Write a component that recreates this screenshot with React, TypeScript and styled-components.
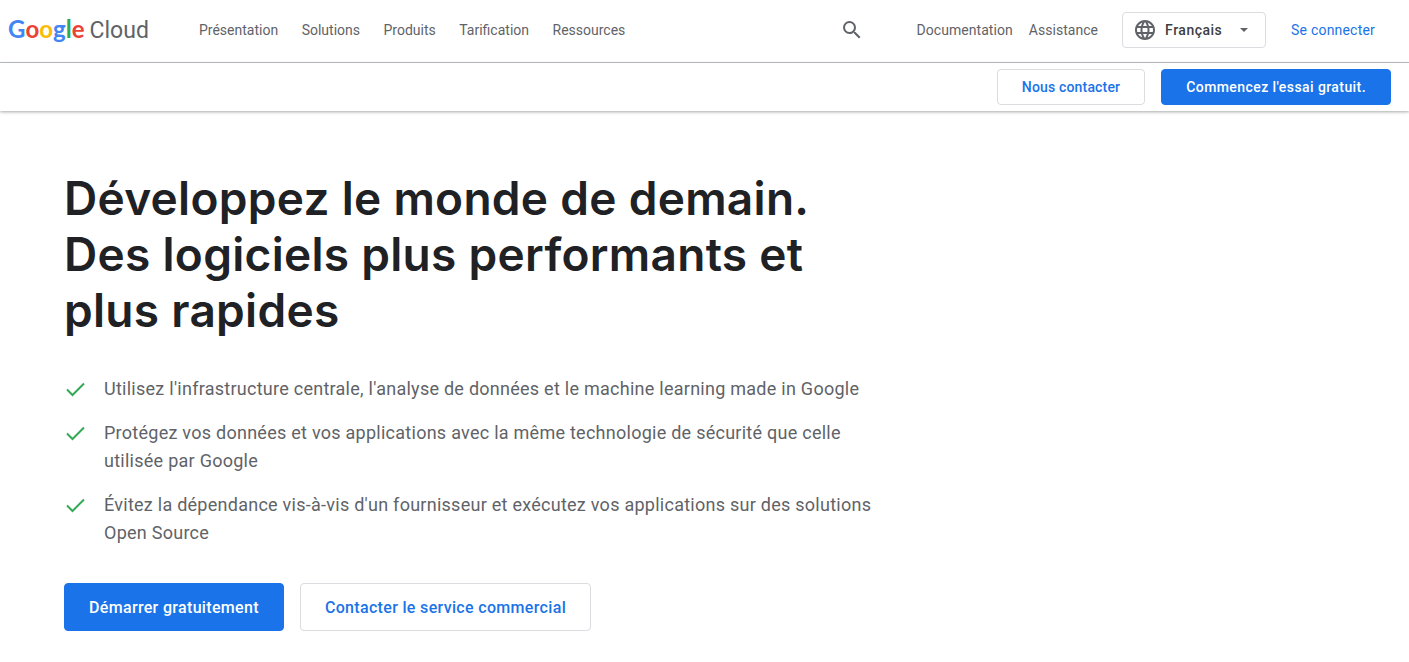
import styled, { createGlobalStyle } from 'styled-components';
import { MdLanguage, MdSearch } from 'react-icons/md';

const NAV_LINKS = ['Présentation', 'Solutions', 'Produits', 'Tarification', 'Ressources'];

const BENEFITS = [
    "Utilisez l'infrastructure centrale, l'analyse de données et le machine learning made in Google",
    'Protégez vos données et vos applications avec la même technologie de sécurité que celle utilisée par Google',
    "Évitez la dépendance vis-à-vis d'un fournisseur et exécutez vos applications sur des solutions Open Source",
];

const LOGO_LETTERS = [
    { letter: 'G', color: '#4285f4' },
    { letter: 'o', color: '#ea4335' },
    { letter: 'o', color: '#fbbc05' },
    { letter: 'g', color: '#4285f4' },
    { letter: 'l', color: '#34a853' },
    { letter: 'e', color: '#ea4335' },
];

export default function App() {
    return (
        <>
            <GlobalStyle />
            <TopBar>
                <Logo>
                    {LOGO_LETTERS.map((item, index) => (
                        <LogoLetter key={index} $color={item.color}>
                            {item.letter}
                        </LogoLetter>
                    ))}
                    <LogoCloud>Cloud</LogoCloud>
                </Logo>
                <Nav>
                    {NAV_LINKS.map((link) => (
                        <NavLink key={link}>{link}</NavLink>
                    ))}
                </Nav>
                <SearchButton>
                    <MdSearch size={24} />
                </SearchButton>
                <SecondaryNav>
                    <SecondaryLink>Documentation</SecondaryLink>
                    <SecondaryLink>Assistance</SecondaryLink>
                </SecondaryNav>
                <LanguageSelect>
                    <MdLanguage size={24} />
                    <LanguageLabel>Français</LanguageLabel>
                    <Caret />
                </LanguageSelect>
                <SignIn>Se connecter</SignIn>
            </TopBar>
            <ActionBar>
                <OutlineButton $small>Nous contacter</OutlineButton>
                <PrimaryButton $small>Commencez l'essai gratuit.</PrimaryButton>
            </ActionBar>
            <Hero>
                <Title>
                    Développez le monde de demain.
                    <br />
                    Des logiciels plus performants et
                    <br />
                    plus rapides
                </Title>
                <BenefitList>
                    {BENEFITS.map((text) => (
                        <Benefit key={text}>
                            <CheckIcon viewBox="0 0 20 16">
                                <path d="M1.5 8.5 L7 14 L18.5 2.5" />
                            </CheckIcon>
                            <span>{text}</span>
                        </Benefit>
                    ))}
                </BenefitList>
                <HeroActions>
                    <PrimaryButton>Démarrer gratuitement</PrimaryButton>
                    <OutlineButton>Contacter le service commercial</OutlineButton>
                </HeroActions>
            </Hero>
        </>
    );
}

const GlobalStyle = createGlobalStyle`
    * {
        box-sizing: border-box;
    }

    html,
    body {
        margin: 0;
        height: 100%;
        overflow: hidden;
        background: #fff;
        font-family: Roboto, 'Liberation Sans', sans-serif;
    }
`;

const TopBar = styled.header`
    display: flex;
    align-items: center;
    height: 63px;
    padding: 0 34px 2px 8px;
    border-bottom: 1px solid #bdc1c6;
    background: #fff;
`;

const Logo = styled.div`
    display: flex;
    align-items: baseline;
    width: 191px;
    font-size: 24px;
    line-height: 30px;
`;

const LogoLetter = styled.span<{ $color: string }>`
    color: ${(props) => props.$color};
    font-family: Lato, Roboto, sans-serif;
    font-weight: 700;
`;

const LogoCloud = styled.span`
    margin-left: 5px;
    color: #5f6368;
    font-family: Roboto, sans-serif;
    font-size: 23px;
`;

const Nav = styled.nav`
    display: flex;
    gap: 23.5px;
`;

const NavLink = styled.a`
    color: #5f6368;
    font-size: 14px;
    line-height: 20px;
    white-space: nowrap;
`;

const SecondaryLink = styled(NavLink)`
    letter-spacing: 0.05px;
`;

const SearchButton = styled.div`
    display: flex;
    margin-left: auto;
    margin-right: 53px;
    color: #5f6368;
`;

const SecondaryNav = styled.div`
    display: flex;
    gap: 16px;
`;

const LanguageSelect = styled.div`
    display: flex;
    align-items: center;
    width: 144px;
    height: 36px;
    margin-left: 24px;
    padding: 0 17px 0 10px;
    border: 1px solid #dadce0;
    border-radius: 4px;
    color: #5f6368;
`;

const LanguageLabel = styled.span`
    margin-left: 8px;
    color: #3c4043;
    font-size: 14px;
    font-weight: 500;
    letter-spacing: 0.5px;
`;

const Caret = styled.span`
    margin-left: auto;
    border-top: 4px solid #5f6368;
    border-left: 4px solid transparent;
    border-right: 4px solid transparent;
`;

const SignIn = styled.a`
    margin-left: 25px;
    color: #1a73e8;
    font-size: 14px;
    letter-spacing: 0.2px;
    white-space: nowrap;
`;

const ActionBar = styled.div`
    display: flex;
    justify-content: flex-end;
    align-items: center;
    gap: 16px;
    height: 48px;
    padding-right: 18px;
    background: #fff;
    box-shadow: 0 1px 3px rgba(60, 64, 67, 0.45);
`;

const Button = styled.button<{ $small?: boolean }>`
    height: ${(props) => (props.$small ? '36px' : '48px')};
    padding: 0 24px;
    border-radius: 4px;
    font-family: Roboto, 'Liberation Sans', sans-serif;
    font-size: ${(props) => (props.$small ? '14px' : '16px')};
    font-weight: 500;
    letter-spacing: 0.33px;
    white-space: nowrap;
`;

const PrimaryButton = styled(Button)`
    border: 1px solid #1a73e8;
    background: #1a73e8;
    color: #fff;
    ${(props) => props.$small && 'letter-spacing: 0.42px;'}
`;

const OutlineButton = styled(Button)`
    border: 1px solid #dadce0;
    background: #fff;
    color: #1a73e8;
    ${(props) => props.$small && 'letter-spacing: 0.17px;'}
`;

const Hero = styled.main`
    padding: 59px 0 0 64px;
`;

const Title = styled.h1`
    margin: 0;
    color: #202124;
    font-family: Inter, Roboto, sans-serif;
    font-size: 46px;
    font-weight: 600;
    line-height: 56px;
    letter-spacing: 0.3px;
`;

const BenefitList = styled.ul`
    display: flex;
    flex-direction: column;
    gap: 16px;
    width: 820px;
    margin: 37px 0 0;
    padding: 0;
    list-style: none;
`;

const Benefit = styled.li`
    display: flex;
    gap: 18px;
    color: #5f6368;
    font-size: 18px;
    line-height: 28px;
    letter-spacing: 0.26px;
`;

const CheckIcon = styled.svg`
    flex: none;
    width: 21px;
    height: 16px;
    margin-top: 6px;
    margin-left: 1px;

    path {
        fill: none;
        stroke: #34a853;
        stroke-width: 2;
    }
`;

const HeroActions = styled.div`
    display: flex;
    gap: 16px;
    margin-top: 36px;
`;
